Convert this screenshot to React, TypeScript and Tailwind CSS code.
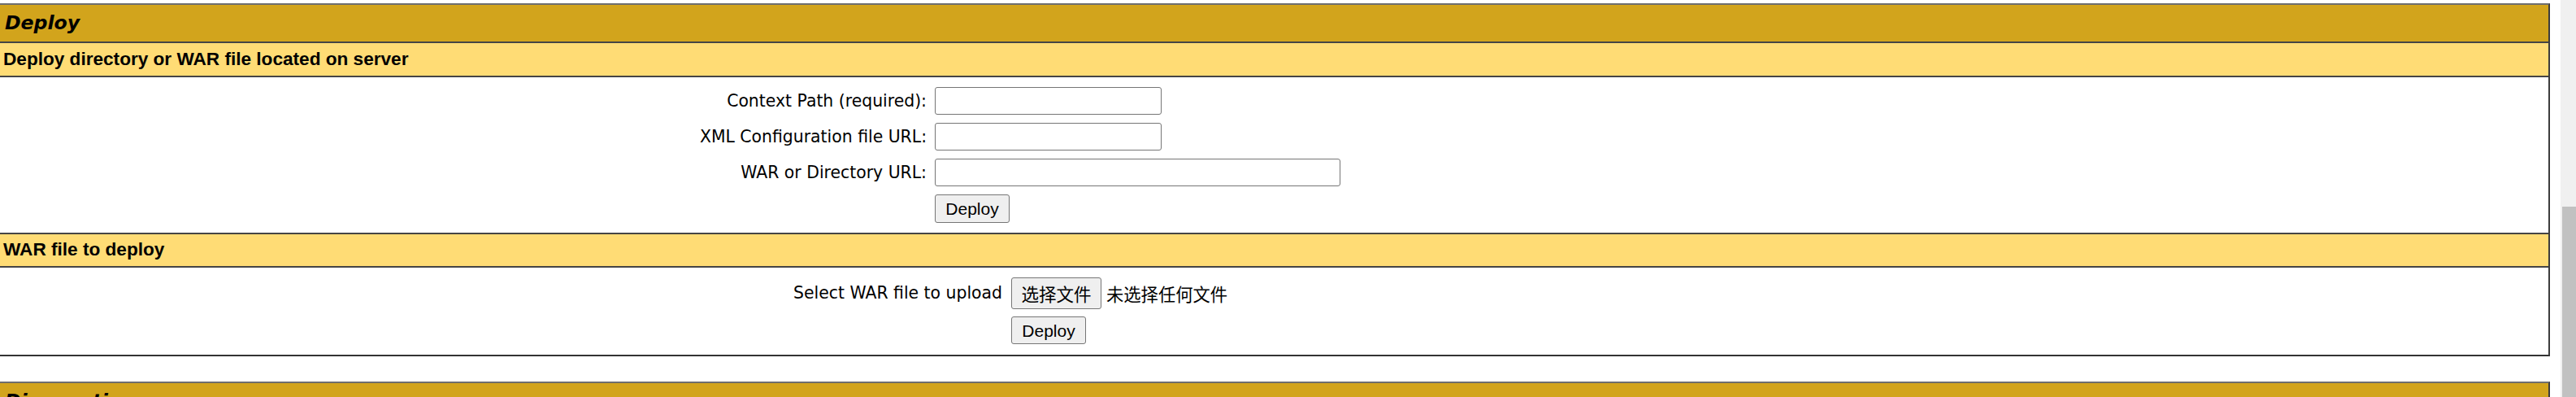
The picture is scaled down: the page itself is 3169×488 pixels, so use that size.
import React from "react";

const labelFont = "font-['DejaVu_Sans',sans-serif] text-[20.4px] leading-none";
const headFont = "font-['Liberation_Sans',Arial,sans-serif] text-[22.6px] font-bold leading-none";
const titleFont = "font-['DejaVu_Sans',sans-serif] text-[23.6px] font-bold italic leading-none";
const btnFont = "font-['Liberation_Sans','Noto_Sans_CJK_SC',sans-serif] text-[21px] leading-none";

function Btn({ children, w, h }: { children: React.ReactNode; w: string; h: string }) {
  return (
    <button
      type="button"
      className={`${btnFont} ${w} ${h} flex items-center justify-center rounded-[3px] border border-[#767676] bg-[#efefef] text-black`}
    >
      {children}
    </button>
  );
}

function TextInput({ w }: { w: string }) {
  return <input type="text" className={`${w} h-[34px] rounded-[3px] border border-[#767676] bg-white`} />;
}

function Label({ children }: { children: React.ReactNode }) {
  return <div className={`${labelFont} flex items-center justify-end whitespace-nowrap`}>{children}</div>;
}

function DeploySection() {
  return (
    <div className="border-t-2 border-r-2 border-b-2 border-t-[#6e6e6e] border-r-[#3c3c3c] border-b-[#333333]">
      <div className="flex h-[45px] items-center bg-[#d2a41c] pl-[6px]">
        <span className={titleFont}>Deploy</span>
      </div>
      <div className="flex h-[42px] items-center border-t-2 border-[#454545] bg-[#ffdc75] pl-[4px]">
        <span className={headFont}>Deploy directory or WAR file located on server</span>
      </div>
      <div className="h-[193px] border-t-2 border-[#454545] bg-white pt-[12px]">
        <div className="grid grid-cols-[1140px_auto] gap-x-[10px] gap-y-[10px]">
          <Label>Context Path (required):</Label>
          <div className="flex">
            <TextInput w="w-[279px]" />
          </div>
          <Label>XML Configuration file URL:</Label>
          <div className="flex">
            <TextInput w="w-[279px]" />
          </div>
          <Label>WAR or Directory URL:</Label>
          <div className="flex">
            <TextInput w="w-[499px]" />
          </div>
          <div />
          <div className="flex">
            <Btn w="w-[92px]" h="h-[35px]">Deploy</Btn>
          </div>
        </div>
      </div>
      <div className="flex h-[41px] items-center border-t-2 border-[#454545] bg-[#ffdc75] pl-[4px]">
        <span className={headFont}>WAR file to deploy</span>
      </div>
      <div className="h-[109px] border-t-2 border-[#454545] bg-white pt-[12px]">
        <div className="grid grid-cols-[1233px_auto] gap-x-[11px] gap-y-[9px]">
          <Label>Select WAR file to upload</Label>
          <div className="flex items-center gap-[6px]">
            <Btn w="w-[111px]" h="h-[39px]">
              <span className="font-['Noto_Sans_CJK_SC',sans-serif] text-[21.5px]">选择文件</span>
            </Btn>
            <span className="font-['Noto_Sans_CJK_SC',sans-serif] text-[21.3px] leading-none">未选择任何文件</span>
          </div>
          <div />
          <div className="flex">
            <Btn w="w-[92px]" h="h-[34px]">Deploy</Btn>
          </div>
        </div>
      </div>
    </div>
  );
}

function DiagnosticsSection() {
  return (
    <div className="border-t-2 border-r-2 border-t-[#6e6e6e] border-r-[#3c3c3c]">
      <div className="flex h-[45px] items-center bg-[#d2a41c] pl-[6px]">
        <span className={titleFont}>Diagnostics</span>
      </div>
    </div>
  );
}

export default function App() {
  return (
    <div className="flex h-[488px] w-full overflow-hidden bg-white text-black">
      <div className="min-w-0 flex-1 pt-[4px] pr-[13px]">
        <DeploySection />
        <div className="h-[31px]" />
        <DiagnosticsSection />
      </div>
      <div className="flex w-[19px] shrink-0 flex-col bg-[#f0f0f0] pt-[254px] pl-[2px]">
        <div className="flex-1 bg-[#c1c1c1]" />
      </div>
    </div>
  );
}
